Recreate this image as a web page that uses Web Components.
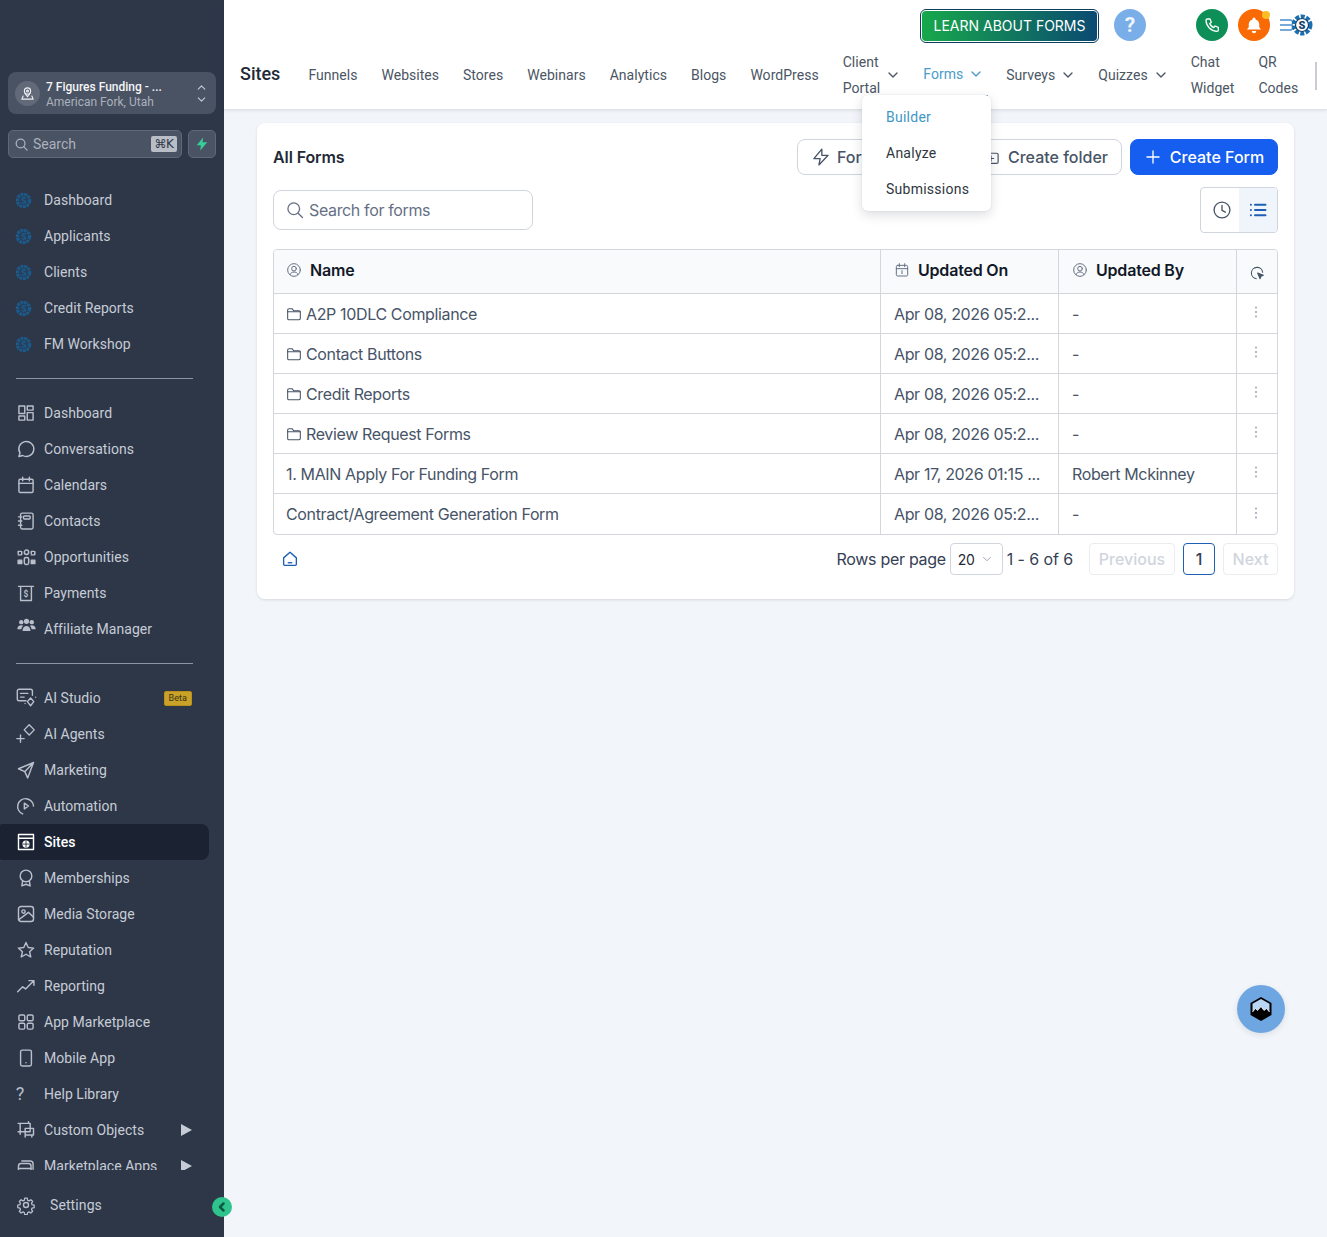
<!DOCTYPE html>
<html lang="en">
<head>
<meta charset="utf-8">
<title>Forms</title>
<style>
html, body { margin: 0; height: 100%; background: #f2f5f9; }
body { font-family: Inter, "Liberation Sans", sans-serif; overflow: hidden; }
</style>
</head>
<body>
<app-shell>
	<side-bar slot="side"></side-bar>
	<top-bar slot="top"></top-bar>
	<forms-card slot="content"></forms-card>
	<forms-menu slot="over"></forms-menu>
	<chat-widget slot="over"></chat-widget>
</app-shell>

<script>
// shared stroke icons, 24x24 unless noted
const ICONES = {
	grid: '<rect x="3.5" y="3.5" width="7" height="9"/><rect x="13.5" y="3.5" width="7" height="5"/><rect x="3.5" y="15.5" width="7" height="5"/><rect x="13.5" y="11.5" width="7" height="9"/>',
	chat: '<path d="M3.5 21l1.3-4.2A9 9 0 1 1 8 19.8z"/>',
	calendar: '<rect x="3.5" y="5" width="17" height="16" rx="1.5"/><path d="M3.5 10h17M8 2.5V7M16 2.5V7"/>',
	contacts: '<rect x="5.5" y="2.5" width="15" height="19" rx="2"/><rect x="9" y="6" width="8" height="3.5" rx="1"/><path d="M3 7h4M3 12h4M3 17h4"/>',
	opportunities: '<circle cx="12" cy="6" r="2.5"/><rect x="9.5" y="12" width="5" height="8" rx="2"/><path d="M2.5 5h4v4h-4zM17.5 5h4v4h-4z" stroke-dasharray="3 1.5"/><path d="M2.5 15h4v4h-4zM17.5 15h4v4h-4z" fill="currentColor"/>',
	payments: '<path d="M3 4h18M5.500 4v17h13V4"/><text x="12" y="17" font-size="10" font-weight="700" text-anchor="middle" fill="currentColor" stroke="none" font-family="Roboto">$</text>',
	affiliate: '<g fill="currentColor" stroke="none"><circle cx="6" cy="7" r="2.500"/><circle cx="18" cy="7" r="2.500"/><circle cx="12" cy="6" r="3"/><path d="M1.500 15c0-3 2-4.500 4.500-4.500 1 0 1.700.2 2.300.6-1.300 1-2 2.300-2 3.900zM22.500 15c0-3-2-4.500-4.500-4.500-1 0-1.700.2-2.300.6 1.300 1 2 2.300 2 3.900zM7.500 17c0-3.500 2-5.500 4.500-5.500s4.500 2 4.500 5.500z"/></g>',
	studio: '<path d="M12 15H4.500a2 2 0 0 1-2-2V4.500a2 2 0 0 1 2-2H17a2 2 0 0 1 2 2V9"/><path d="M6 7h8M6 11h4"/><path d="M17 12l3.500 4-3.500 4.500L13.500 16zM22.500 11v.1M11 18v.1"/>',
	agents: '<path d="M15.500 2l5.500 5.500-5.500 5.500L10 7.500zM6 13v8M2 17h8"/>',
	marketing: '<path d="M21 3L3 10.500l7.500 3.500L14 21.500z M21 3L10.500 14"/>',
	automation: '<path d="M8 21.500A9.500 9.500 0 1 1 21 12"/><path d="M10 8.500l5 3.500-5 3.500z"/>',
	sites: '<rect x="3" y="3" width="18" height="18"/><path d="M3 7.500h18"/><circle cx="12" cy="14.500" r="3.500" fill="currentColor"/><path d="M8.500 14.500h7M12 11v7" stroke="#1c2433" stroke-width="1"/>',
	memberships: '<circle cx="12" cy="9.500" r="7"/><path d="M8 15.500L7 21.500l5-2 5 2-1-6"/>',
	media: '<rect x="3" y="3" width="18" height="18" rx="3"/><circle cx="9" cy="9" r="2"/><path d="M3 19l12-9 6 6"/>',
	star: '<path d="M12 3l2.700 6 6.500.7-4.900 4.300 1.400 6.400L12 17.100 6.300 20.400l1.400-6.400L2.800 9.700 9.300 9z"/>',
	reporting: '<path d="M2 19l6-6 3.500 2.500L21 6M15.500 5.500H21.500V11"/>',
	apps: '<rect x="3.500" y="3.500" width="7" height="7" rx="1.500"/><rect x="13.500" y="3.500" width="7" height="7" rx="1.500"/><rect x="3.500" y="13.500" width="7" height="7" rx="1.500"/><rect x="13.500" y="13.500" width="7" height="7" rx="1.500"/>',
	mobile: '<rect x="5.500" y="2.500" width="13" height="19" rx="2"/><path d="M12 17.500v.1"/>',
	objects: '<path d="M5 4h12v10H5zM11 10h10v8H11zM2.500 4H7M2.500 14H7M15 4v-2M19 20.500v-2.500M11 20.500v-2.500M5 17V14"/>',
	market: '<path d="M3 21V12a3 3 0 0 1 3-3h9a3 3 0 0 1 3 3v9zM7 6h10a3.500 3.500 0 0 1 3.500 3.500V16" /><path d="M3 15h15" />',
	gear: '<circle cx="12" cy="12" r="3"/><path d="M10.300 2.800h3.400l.6 2.900 1.800.8 2.500-1.600 2.400 2.400-1.600 2.500.8 1.800 2.900.6v3.400l-2.900.6-.8 1.800 1.600 2.500-2.400 2.400-2.500-1.600-1.800.8-.6 2.900h-3.400l-.6-2.900-1.800-.8-2.500 1.600-2.400-2.400 1.600-2.500-.8-1.800-2.900-.6v-3.400l2.900-.6.8-1.800-1.600-2.500 2.400-2.400 2.500 1.600 1.800-.8z" transform="translate(1.300 1.300) scale(.89)"/>',
	search: '<circle cx="10.500" cy="10.500" r="7"/><path d="M15.800 15.800L21 21"/>',
	user: '<circle cx="12" cy="12" r="9.500"/><circle cx="12" cy="10" r="3.500"/><path d="M6 19c1-3 3.500-4 6-4s5 1 6 4"/>',
	calinfo: '<rect x="3.500" y="5" width="17" height="16" rx="2"/><path d="M3.500 10h17M8 2.500V7M16 2.500V7M12 13v4.500"/>',
	folder: '<path d="M2.500 19.500V6a2 2 0 0 1 2-2H9l2.500 3h8a2 2 0 0 1 2 2v9.500a2 2 0 0 1-2 2h-15a2 2 0 0 1-2-1z"/><path d="M2.500 8.500h19"/>',
	folderplus: '<path d="M2.500 19.500V6a2 2 0 0 1 2-2H9l2.500 3h8a2 2 0 0 1 2 2v9.500a2 2 0 0 1-2 2h-15a2 2 0 0 1-2-1z"/><path d="M12 10.500v7M8.500 14h7"/>',
	clock: '<circle cx="12" cy="12" r="9.500"/><path d="M12 6.500V12.500l4 2"/>',
	bolt: '<path d="M13 2.500L3.500 14H11l-1.500 7.500L20.500 10H13z"/>',
	plus: '<path d="M12 4v16M4 12h16"/>',
	chevron: '<path d="M6 9l6 6 6-6"/>',
	refresh: '<path d="M20.500 11A8.500 8.500 0 1 0 11 20.500"/><path d="M13 12l8.500 3.500-3.500 1.500-1.500 3.500z" fill="currentColor"/>',
};

function icone(nome, tamanho = 20, traco = 1.7) {
	return `<svg width="${tamanho}" height="${tamanho}" viewBox="0 0 24 24" fill="none" stroke="currentColor" stroke-width="${traco}" stroke-linecap="round" stroke-linejoin="round" aria-hidden="true">${ICONES[nome]}</svg>`;
}

// the little blue gear used for the custom sidebar links
const engrenagem = `<svg width="17" height="17" viewBox="0 0 24 24" aria-hidden="true" style="margin-left:-5px">
	<circle cx="12" cy="12" r="8.500" fill="none" stroke="#1b5a8a" stroke-width="5" stroke-dasharray="4 1"/>
	<circle cx="12" cy="12" r="6.500" fill="#26405e"/>
	<path d="M15 9c-2-1.500-5-1-5 1 0 2.500 5 1.500 5 4 0 2-3.500 2-5.500.8" fill="none" stroke="#1b5f8e" stroke-width="1.800"/>
</svg>`;


const templateAppShell = document.createElement('template');
templateAppShell.innerHTML = `
<style>
:host { display: flex; height: 1237px; position: relative; overflow: hidden; }
.lado { flex: 0 0 224px; display: flex; }
.principal { flex: 1; min-width: 0; display: flex; flex-direction: column; }
.conteudo { padding: 13px 33px 0 33px; }
</style>
<div class="lado"><slot name="side"></slot></div>
<div class="principal">
	<slot name="top"></slot>
	<div class="conteudo"><slot name="content"></slot></div>
</div>
<slot name="over"></slot>
`;

class AppShell extends HTMLElement {
	constructor() {
		super();
		this.attachShadow({mode: 'open'});
		this.shadowRoot.appendChild(templateAppShell.content.cloneNode(true));
	}
}
window.customElements.define('app-shell', AppShell);


const templateSideItem = document.createElement('template');
templateSideItem.innerHTML = `
<style>
:host { display: block; height: 36px; width: 209px; }
a {
	display: flex; align-items: center; gap: 8px; height: 36px; padding-left: 16px;
	color: #c6ccd6; font: 400 14px/20px Roboto, sans-serif; letter-spacing: .04px;
	border-radius: 2px 8px 8px 2px; box-sizing: border-box;
}
.ico { width: 20px; height: 20px; display: flex; align-items: center; justify-content: center; color: #b9c0cc; flex: none; }
::slotted([slot=icon]) { display: flex; align-items: center; justify-content: center; }
.fim { margin-left: auto; margin-right: 17px; display: flex; align-items: center; }
:host([active]) a { background: #1b2333; color: #fff; font-weight: 500; }
:host([active]) .ico { color: #fff; }
</style>
<a><span class="ico"><slot name="icon"></slot></span><span><slot></slot></span><span class="fim"><slot name="end"></slot></span></a>
`;

class SideItem extends HTMLElement {
	constructor() {
		super();
		this.attachShadow({mode: 'open'});
		this.shadowRoot.appendChild(templateSideItem.content.cloneNode(true));
	}
}
window.customElements.define('side-item', SideItem);


const templateSideBar = document.createElement('template');
templateSideBar.innerHTML = `
<style>
:host { display: flex; flex-direction: column; width: 224px; height: 1237px; background: #2e3748; position: relative; font-family: Roboto, sans-serif; box-sizing: border-box; padding-top: 72px; }
.local {
	margin: 0 8px; height: 42px; border-radius: 8px; background: #4a5363; display: flex; align-items: center;
	padding-left: 7px; gap: 6px; box-sizing: border-box; color: #fff;
}
.avatar { width: 25px; height: 25px; border-radius: 50%; background: #626a79; display: flex; align-items: center; justify-content: center; color: #eef0f3; flex: none; }
.nomes { flex: 1; min-width: 0; margin-top: 3px; }
.nome { font: 500 12px/15px Roboto, sans-serif; color: #f4f5f7; }
.cidade { font: 400 12px/15px Roboto, sans-serif; color: #aab1bd; }
.setas { margin-right: 8px; display: flex; flex-direction: column; color: #c6ccd6; }
.setas svg:first-child { transform: rotate(180deg); margin-bottom: -1px; }
.busca { margin: 16px 8px 0; display: flex; gap: 6px; }
.campo {
	flex: 1; height: 28px; border: 1px solid #5f6876; background: #4a5363; border-radius: 5px; display: flex; align-items: center;
	padding: 0 4px 0 5px; gap: 4px; color: #aab1bd; font: 400 14px Roboto, sans-serif; box-sizing: border-box;
}
.campo span { flex: 1; }
kbd { background: #b8bdc6; color: #2e3748; font: 400 12px/16px "DejaVu Sans", sans-serif; border-radius: 2px; padding: 0 2px; width: 26px; height: 16px; text-align: center; box-sizing: border-box; letter-spacing: -.5px; }
.raio { width: 28px; height: 28px; border: 1px solid #5f6876; background: #4a5363; border-radius: 5px; display: flex; align-items: center; justify-content: center; box-sizing: border-box; }
.lista { margin-top: 24px; height: 988px; overflow: hidden; flex: none; }
hr { border: 0; border-top: 1px solid #8d95a3; margin: 16px 31px 16px 16px; height: 0; }
.beta { background: #c9a227; color: #3a3418; font: 400 9px/13px Roboto, sans-serif; padding: 0 4px; border-radius: 2px; border: 1px solid #b8901c; height: 13px; display: block; }
.tri { width: 0; height: 0; border-left: 11px solid #c6ccd6; border-top: 6.500px solid transparent; border-bottom: 6.500px solid transparent; display: block; }
.ajustes { position: absolute; left: 16px; top: 1187px; height: 36px; display: flex; align-items: center; gap: 14px; color: #c6ccd6; font: 400 14px Roboto, sans-serif; letter-spacing: .1px; }
.ajustes svg { color: #b9c0cc; }
.recolher { position: absolute; left: 212px; top: 1197px; width: 20px; height: 20px; border-radius: 50%; background: #2fc48d; display: flex; align-items: center; justify-content: center; color: #0d5a40; z-index: 3; }
</style>
<div class="local">
	<span class="avatar">${icone('user', 15, 1.8).replace(ICONES.user, '<circle cx="12" cy="8" r="5"/><circle cx="12" cy="8" r="1.500"/><path d="M8 12l4 5 4-5M5 16l-2 5h18l-2-5"/>')}</span>
	<div class="nomes"><div class="nome">7 Figures Funding - ...</div><div class="cidade">American Fork, Utah</div></div>
	<div class="setas">${icone('chevron', 13, 2)}${icone('chevron', 13, 2)}</div>
</div>
<div class="busca">
	<div class="campo">${icone('search', 15, 2)}<span>Search</span><kbd>⌘K</kbd></div>
	<div class="raio"><svg width="14" height="14" viewBox="0 0 24 24"><path d="M14 1L3 14h7l-1 9 12-14h-8z" fill="#36cf9a"/></svg></div>
</div>
<div class="lista">
	<side-item><span slot="icon">${engrenagem}</span>Dashboard</side-item>
	<side-item><span slot="icon">${engrenagem}</span>Applicants</side-item>
	<side-item><span slot="icon">${engrenagem}</span>Clients</side-item>
	<side-item><span slot="icon">${engrenagem}</span>Credit Reports</side-item>
	<side-item><span slot="icon">${engrenagem}</span>FM Workshop</side-item>
	<hr>
	<side-item><span slot="icon">${icone('grid')}</span>Dashboard</side-item>
	<side-item><span slot="icon">${icone('chat')}</span>Conversations</side-item>
	<side-item><span slot="icon">${icone('calendar')}</span>Calendars</side-item>
	<side-item><span slot="icon">${icone('contacts')}</span>Contacts</side-item>
	<side-item><span slot="icon">${icone('opportunities', 21)}</span>Opportunities</side-item>
	<side-item><span slot="icon">${icone('payments')}</span>Payments</side-item>
	<side-item><span slot="icon" style="margin-top:-6px">${icone('affiliate', 21)}</span>Affiliate Manager</side-item>
	<hr>
	<side-item><span slot="icon">${icone('studio', 22, 1.5)}</span>AI Studio<span slot="end" class="beta">Beta</span></side-item>
	<side-item><span slot="icon">${icone('agents', 22, 1.5)}</span>AI Agents</side-item>
	<side-item><span slot="icon">${icone('marketing')}</span>Marketing</side-item>
	<side-item><span slot="icon">${icone('automation')}</span>Automation</side-item>
	<side-item active><span slot="icon">${icone('sites')}</span>Sites</side-item>
	<side-item><span slot="icon">${icone('memberships')}</span>Memberships</side-item>
	<side-item><span slot="icon">${icone('media')}</span>Media Storage</side-item>
	<side-item><span slot="icon">${icone('star')}</span>Reputation</side-item>
	<side-item><span slot="icon">${icone('reporting')}</span>Reporting</side-item>
	<side-item><span slot="icon">${icone('apps')}</span>App Marketplace</side-item>
	<side-item><span slot="icon">${icone('mobile')}</span>Mobile App</side-item>
	<side-item><span slot="icon" style="font-size:18px;margin-left:-12px">?</span>Help Library</side-item>
	<side-item><span slot="icon">${icone('objects')}</span>Custom Objects<span slot="end" class="tri"></span></side-item>
	<side-item><span slot="icon">${icone('market')}</span>Marketplace Apps<span slot="end" class="tri"></span></side-item>
</div>
<div class="ajustes">${icone('gear')}<span>Settings</span></div>
<div class="recolher"><svg width="12" height="12" viewBox="0 0 24 24" fill="none" stroke="currentColor" stroke-width="5" stroke-linecap="round" stroke-linejoin="round"><path d="M15 5l-7 7 7 7"/></svg></div>
`;

class SideBar extends HTMLElement {
	constructor() {
		super();
		this.attachShadow({mode: 'open'});
		this.shadowRoot.appendChild(templateSideBar.content.cloneNode(true));
	}
}
window.customElements.define('side-bar', SideBar);


const templateNavTab = document.createElement('template');
templateNavTab.innerHTML = `
<style>
:host { display: flex; align-items: center; gap: 5px; color: #4b5563; font: 400 14px/26px Roboto, sans-serif; letter-spacing: .03px; position: relative; height: 52px; white-space: nowrap; }
:host([active]) { color: #4a9cc9; padding-bottom: 2px; box-sizing: border-box; }
:host([active])::after { content: ""; position: absolute; left: 0; right: -6px; bottom: 4px; height: 2px; background: #2f86ab; }
.seta { display: none; align-items: center; margin-right: -2px; }
:host([menu]) .seta { display: flex; }
</style>
<span><slot></slot></span><span class="seta">${icone('chevron', 16, 2)}</span>
`;

class NavTab extends HTMLElement {
	constructor() {
		super();
		this.attachShadow({mode: 'open'});
		this.shadowRoot.appendChild(templateNavTab.content.cloneNode(true));
	}
}
window.customElements.define('nav-tab', NavTab);


const templateTopBar = document.createElement('template');
templateTopBar.innerHTML = `
<style>
:host { display: block; height: 110px; background: #fff; border-bottom: 1px solid #dfe2e6; box-sizing: border-box; box-shadow: 0 1px 3px rgba(16,24,40,.08); position: relative; }
.acoes { height: 49px; display: flex; align-items: flex-start; padding-top: 9px; box-sizing: border-box; padding-left: 696px; }
.aprender {
	width: 179px; height: 34px; box-sizing: border-box; border: 1px solid #0d3f5c; border-radius: 6px; padding: 1px; background: #fff; display: flex;
}
.aprender span { flex: 1; border-radius: 4px; background: linear-gradient(90deg, #17a84b, #0b4a72); color: #fff; font: 400 14px/29px Inter, sans-serif; text-align: center; }
.redondo { width: 32px; height: 32px; border-radius: 50%; display: flex; align-items: center; justify-content: center; color: #fff; position: relative; flex: none; }
.ajuda { background: #7aaee8; margin-left: 15px; font: 700 21px Roboto, sans-serif; color: #eef5fd; }
.fone { background: #0e8f57; margin-left: 50px; }
.sino { background: #f96a05; margin-left: 10px; }
.sino i { position: absolute; right: 0; top: 2px; width: 8px; height: 8px; border-radius: 50%; background: #fbbf24; }
.logo { margin-left: 9px; margin-top: 3px; }
nav { display: flex; align-items: center; gap: 24px; padding-left: 16px; height: 52px; }
.titulo { font: 500 18px Roboto, sans-serif; color: #1f2937; margin-right: 4px; margin-top: -4px; }
.rolagem { position: absolute; left: 1091px; top: 62px; width: 2px; height: 28px; background: #c9ccd1; }
</style>
<div class="acoes">
	<div class="aprender"><span>LEARN ABOUT FORMS</span></div>
	<div class="redondo ajuda">?</div>
	<div class="redondo fone"><svg width="16" height="16" viewBox="0 0 24 24" fill="none" stroke="currentColor" stroke-width="2" stroke-linejoin="round"><path d="M5 3h4l2 5-2.500 2a13 13 0 0 0 6 6l2-2.500 5 2v4a2 2 0 0 1-2 2A17 17 0 0 1 3 5a2 2 0 0 1 2-2z"/></svg></div>
	<div class="redondo sino"><i></i><svg width="18" height="18" viewBox="0 0 24 24" fill="currentColor"><path d="M12 2a2 2 0 0 1 2 2v.5A7 7 0 0 1 19 11v4l2.500 3h-19L5 15v-4a7 7 0 0 1 5-6.500V4a2 2 0 0 1 2-2z"/><path d="M9 20h6a3 3 0 0 1-6 0z"/></svg></div>
	<svg class="logo" width="34" height="26" viewBox="0 0 34 26" fill="none">
		<path d="M1 8h11l3 3M1 13h13M1 18h11l3-3" stroke="#4a8fd0" stroke-width="1.300"/>
		<circle cx="23" cy="13" r="8.500" stroke="#1b6fb0" stroke-width="4" stroke-dasharray="4 1.500"/>
		<circle cx="23" cy="13" r="6.500" fill="#fff" stroke="#123f66" stroke-width="1.200"/>
		<text x="23" y="17" text-anchor="middle" font-family="Roboto" font-weight="900" font-size="11" fill="#123f66">S</text>
	</svg>
</div>
<nav>
	<span class="titulo">Sites</span>
	<nav-tab>Funnels</nav-tab>
	<nav-tab>Websites</nav-tab>
	<nav-tab>Stores</nav-tab>
	<nav-tab>Webinars</nav-tab>
	<nav-tab>Analytics</nav-tab>
	<nav-tab>Blogs</nav-tab>
	<nav-tab>WordPress</nav-tab>
	<nav-tab menu>Client<br>Portal</nav-tab>
	<nav-tab menu active>Forms</nav-tab>
	<nav-tab menu>Surveys</nav-tab>
	<nav-tab menu>Quizzes</nav-tab>
	<nav-tab>Chat<br>Widget</nav-tab>
	<nav-tab>QR<br>Codes</nav-tab>
</nav>
<div class="rolagem"></div>
`;

class TopBar extends HTMLElement {
	constructor() {
		super();
		this.attachShadow({mode: 'open'});
		this.shadowRoot.appendChild(templateTopBar.content.cloneNode(true));
	}
}
window.customElements.define('top-bar', TopBar);


const templateFormsMenu = document.createElement('template');
templateFormsMenu.innerHTML = `
<style>
:host { position: absolute; left: 862px; top: 95px; width: 129px; height: 116px; background: #fff; border-radius: 6px; box-shadow: 0 4px 12px rgba(16,24,40,.14), 0 0 2px rgba(16,24,40,.1); z-index: 5; padding: 4px 0 0 24px; box-sizing: border-box; }
div { height: 36px; display: flex; align-items: center; font: 400 14px Roboto, sans-serif; color: #2f3640; letter-spacing: .25px; }
.ativo { color: #3f97c6; }
</style>
<div class="ativo">Builder</div>
<div>Analyze</div>
<div>Submissions</div>
`;

class FormsMenu extends HTMLElement {
	constructor() {
		super();
		this.attachShadow({mode: 'open'});
		this.shadowRoot.appendChild(templateFormsMenu.content.cloneNode(true));
	}
}
window.customElements.define('forms-menu', FormsMenu);


const templateFormsTable = document.createElement('template');
templateFormsTable.innerHTML = `
<style>
:host { display: block; border: 1px solid #d3d6db; border-radius: 4px; overflow: hidden; }
.linha { display: grid; grid-template-columns: 606px 178px 178px 1fr; height: 40px; border-top: 1px solid #d3d6db; box-sizing: border-box; }
.linha.cab { height: 43px; border-top: 0; background: #f8fafc; }
.linha:last-child { height: 41px; }
.cel { display: flex; align-items: center; gap: 4px; padding: 0 12px 0 13px; font-size: 16px; letter-spacing: -.36px; color: #475467; border-left: 1px solid #d3d6db; white-space: nowrap; overflow: hidden; min-width: 0; }
.cel:first-child { border-left: 0; padding-left: 12px; }
.cab .cel { color: #111827; gap: 8px; font-weight: 600; letter-spacing: -.2px; padding-bottom: 3px; }
.cab svg { color: #667085; flex: none; }
.cel svg { flex: none; }
.cel.pontos { justify-content: center; padding: 0 2px 0 0; color: #98a2b3; }
.cab .cel.pontos { padding: 3px 0 0 0; }
</style>
<div class="corpo"></div>
`;

class FormsTable extends HTMLElement {
	constructor() {
		super();
		this.attachShadow({mode: 'open'});
		this.shadowRoot.appendChild(templateFormsTable.content.cloneNode(true));
		const data = 'Apr 08, 2026 05:2...';
		const linhas = [
			['A2P 10DLC Compliance', data, '-', true],
			['Contact Buttons', data, '-', true],
			['Credit Reports', data, '-', true],
			['Review Request Forms', data, '-', true],
			['1. MAIN Apply For Funding Form', 'Apr 17, 2026 01:15 ...', 'Robert Mckinney', false],
			['Contract/Agreement Generation Form', data, '-', false],
		];
		const pontos = '<svg width="14" height="14" viewBox="0 0 14 14" fill="currentColor" style="margin-top:-3px"><circle cx="7" cy="2.500" r="1"/><circle cx="7" cy="7" r="1"/><circle cx="7" cy="11.500" r="1"/></svg>';
		let html = `<div class="linha cab">
			<div class="cel">${icone('user', 16, 1.5)}<span>Name</span></div>
			<div class="cel">${icone('calinfo', 16, 1.5)}<span>Updated On</span></div>
			<div class="cel">${icone('user', 16, 1.5)}<span>Updated By</span></div>
			<div class="cel pontos">${icone('refresh', 16, 1.6).replaceAll('currentColor', '#475467')}</div>
		</div>`;
		for (const [nome, quando, quem, pasta] of linhas) {
			html += `<div class="linha">
				<div class="cel">${pasta ? icone('folder', 16, 1.6) : ''}<span>${nome}</span></div>
				<div class="cel"><span>${quando}</span></div>
				<div class="cel"><span>${quem}</span></div>
				<div class="cel pontos">${pontos}</div>
			</div>`;
		}
		this.shadowRoot.querySelector('.corpo').innerHTML = html;
	}
}
window.customElements.define('forms-table', FormsTable);


const templateUiButton = document.createElement('template');
templateUiButton.innerHTML = `
<style>
:host { display: inline-flex; align-items: center; justify-content: center; gap: 8px; height: 36px; box-sizing: border-box; border: 1px solid #d0d5dd; border-radius: 8px; padding: 0 13px; background: #fff; color: #475467; font: 500 16px Inter, sans-serif; white-space: nowrap; }
:host([primary]) { background: #155eef; border-color: #155eef; color: #fff; }
</style>
<slot name="icon"></slot><slot></slot>
`;

class UiButton extends HTMLElement {
	constructor() {
		super();
		this.attachShadow({mode: 'open'});
		this.shadowRoot.appendChild(templateUiButton.content.cloneNode(true));
	}
}
window.customElements.define('ui-button', UiButton);


const templateFormsCard = document.createElement('template');
templateFormsCard.innerHTML = `
<style>
:host { display: block; width: 1037px; height: 476px; background: #fff; border-radius: 8px; box-shadow: 0 1px 3px rgba(16,24,40,.12); padding: 16px 16px 0; box-sizing: border-box; }
.topo { display: flex; align-items: center; height: 36px; gap: 8px; }
h2 { flex: 1; margin: 0; font: 600 16px Inter, sans-serif; color: #1f2937; letter-spacing: -.1px; }
.filtro { display: flex; justify-content: space-between; align-items: flex-start; margin-top: 12px; height: 46px; }
.busca { margin-top: 3px; width: 260px; height: 40px; border: 1px solid #d0d5dd; border-radius: 8px; box-sizing: border-box; display: flex; align-items: center; gap: 4px; padding: 0 11px; color: #667085; font-size: 16px; letter-spacing: -.36px; }
.alterna { width: 78px; height: 46px; border: 1px solid #d0d5dd; border-radius: 4px; box-sizing: border-box; display: flex; overflow: hidden; }
.alterna span { flex: 1; display: flex; align-items: center; justify-content: center; color: #475467; }
.alterna span:first-child { padding-left: 3px; }
.alterna .on { background: #f0f4fb; color: #1d5fb4; flex: 0 0 38px; }
forms-table { margin-top: 16px; }
.rodape { display: flex; align-items: center; height: 32px; margin-top: 8px; font-size: 16px; color: #344054; letter-spacing: -.3px; }
.casa { margin-left: 8px; color: #1d5fb4; display: flex; flex: 1; }
.rotulo { margin-right: 4px; }
.sel { width: 53px; height: 32px; border: 1px solid #d0d5dd; border-radius: 4px; box-sizing: border-box; display: flex; align-items: center; justify-content: space-between; padding: 0 8px 0 7px; font-size: 14px; color: #1f2937; margin-right: 4px; }
.sel svg { color: #98a2b3; }
.cont { margin-right: 16px; letter-spacing: -.1px; }
.pg { height: 32px; border: 1px solid #eaecf0; border-radius: 4px; box-sizing: border-box; display: flex; align-items: center; justify-content: center; color: #d0d5dd; font-weight: 500; letter-spacing: 0; }
.pg + .pg { margin-left: 8px; }
.atual { border-color: #1d5fb4; color: #344054; }
</style>
<div class="topo">
	<h2>All Forms</h2>
	<ui-button style="width:170px;justify-content:flex-start;gap:6px"><span slot="icon" style="display:flex">${icone('bolt', 20, 1.6)}</span>For</ui-button>
	<ui-button style="width:147px;justify-content:flex-end"><span slot="icon" style="display:flex">${icone('folderplus', 18, 1.6)}</span>Create folder</ui-button>
	<ui-button primary style="width:148px"><span slot="icon" style="display:flex">${icone('plus', 18, 1.8)}</span>Create Form</ui-button>
</div>
<div class="filtro">
	<div class="busca">${icone('search', 20, 1.6)}<span>Search for forms</span></div>
	<div class="alterna">
		<span>${icone('clock', 20, 1.6)}</span>
		<span class="on"><svg width="18" height="18" viewBox="0 0 24 24" fill="none" stroke="currentColor" stroke-width="2.600" stroke-linecap="round"><path d="M8 5h14M8 12h14M8 19h14M2.500 5h.1M2.500 12h.1M2.500 19h.1"/></svg></span>
	</div>
</div>
<forms-table></forms-table>
<div class="rodape">
	<span class="casa"><svg width="18" height="18" viewBox="0 0 24 24" fill="none" stroke="currentColor" stroke-width="1.800" stroke-linejoin="round"><path d="M3.500 10.500L12 3l8.500 7.500V19a1.500 1.500 0 0 1-1.500 1.500H5A1.500 1.500 0 0 1 3.500 19z"/><path d="M9 17h6"/></svg></span>
	<span class="rotulo">Rows per page</span>
	<div class="sel">20 ${icone('chevron', 14, 1.6)}</div>
	<span class="cont">1 - 6 of 6</span>
	<div class="pg" style="width:86px">Previous</div>
	<div class="pg atual" style="width:32px">1</div>
	<div class="pg" style="width:55px">Next</div>
</div>
`;

class FormsCard extends HTMLElement {
	constructor() {
		super();
		this.attachShadow({mode: 'open'});
		this.shadowRoot.appendChild(templateFormsCard.content.cloneNode(true));
	}
}
window.customElements.define('forms-card', FormsCard);


const templateChatWidget = document.createElement('template');
templateChatWidget.innerHTML = `
<style>
:host { position: absolute; left: 1237px; top: 985px; width: 48px; height: 48px; border-radius: 50%; background: #6ea6e2; display: flex; align-items: center; justify-content: center; box-shadow: 0 2px 6px rgba(16,24,40,.1); }
</style>
<svg width="24" height="26" viewBox="0 0 24 26">
	<path d="M12 1l10.500 6v12L12 25 1.500 19V7z" fill="#000"/>
	<path d="M12 3l8.500 4.800V16l-3-3.500-2.500 2-3-4-3.500 4-2-2-3 3.500V7.800z" fill="#b9d6f4"/>
	<path d="M3.500 16l3-3.500 2 2 3.500-4 3 4 2.500-2 3 3.500" fill="none" stroke="#fff" stroke-width=".8"/>
</svg>
`;

class ChatWidget extends HTMLElement {
	constructor() {
		super();
		this.attachShadow({mode: 'open'});
		this.shadowRoot.appendChild(templateChatWidget.content.cloneNode(true));
	}
}
window.customElements.define('chat-widget', ChatWidget);
</script>
</body>
</html>
